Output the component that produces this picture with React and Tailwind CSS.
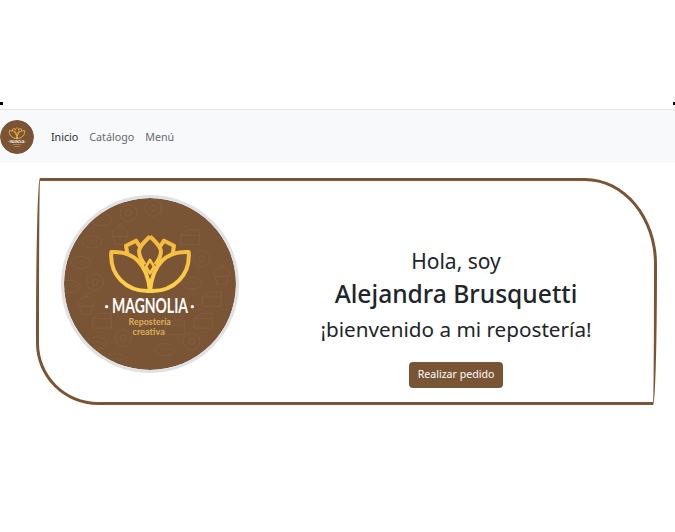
const brown = '#7a5535';

function Doodle({ x, y, kind }) {
    // faint bakery doodles behind the logo
    const stroke = { fill: 'none', stroke: '#835e3c', strokeWidth: 3 };
    if (kind === 'donut') {
        return (
            <g transform={`translate(${x} ${y})`} {...stroke}>
                <circle r="25" />
                <circle r="9" />
            </g>
        );
    }
    if (kind === 'cupcake') {
        return (
            <g transform={`translate(${x} ${y})`} {...stroke}>
                <path d="M-20 0 L-14 24 H14 L20 0 Z" />
                <path d="M-23 0 C-28 -18 -10 -28 0 -28 C10 -28 28 -18 23 0 Z" />
                <circle cy="-33" r="5" />
            </g>
        );
    }
    if (kind === 'pie') {
        return (
            <g transform={`translate(${x} ${y})`} {...stroke}>
                <ellipse rx="30" ry="18" />
                <path d="M-16 -4 L-6 4 M-2 -8 L8 4 M12 -6 L20 2" />
            </g>
        );
    }
    return (
        <g transform={`translate(${x} ${y})`} {...stroke}>
            <path d="M-28 -8 H28 V20 H-28 Z" />
            <path d="M-28 -8 L-6 -24 H28 V-8" />
        </g>
    );
}

function Logo({ id }) {
    return (
        <svg viewBox="42 40 516 516" className="block w-full h-full rounded-full">
            <defs>
                <linearGradient id={id} gradientUnits="userSpaceOnUse" x1="0" y1="150" x2="0" y2="325">
                    <stop offset="0" stopColor="#f5b63c" />
                    <stop offset="1" stopColor="#fdd24e" />
                </linearGradient>
            </defs>
            <circle cx="300" cy="298" r="267" fill={brown} />
            <Doodle x={235} y={85} kind="donut" />
            <Doodle x={310} y={70} kind="donut" />
            <Doodle x={155} y={105} kind="pie" />
            <Doodle x={210} y={155} kind="cupcake" />
            <Doodle x={125} y={172} kind="pie" />
            <Doodle x={420} y={160} kind="cake" />
            <Doodle x={455} y={222} kind="donut" />
            <Doodle x={92} y={233} kind="pie" />
            <Doodle x={515} y={275} kind="cupcake" />
            <Doodle x={60} y={305} kind="pie" />
            <Doodle x={135} y={292} kind="donut" />
            <Doodle x={425} y={295} kind="pie" />
            <Doodle x={485} y={345} kind="cake" />
            <Doodle x={108} y={365} kind="cupcake" />
            <Doodle x={460} y={410} kind="cake" />
            <Doodle x={155} y={410} kind="cake" />
            <Doodle x={375} y={430} kind="cake" />
            <Doodle x={140} y={475} kind="pie" />
            <Doodle x={220} y={460} kind="donut" />
            <Doodle x={425} y={470} kind="donut" />
            <Doodle x={345} y={495} kind="pie" />
            <Doodle x={200} y={525} kind="pie" />
            <g fill="none" stroke={`url(#${id})`} strokeWidth="12" strokeLinejoin="round">
                <path d="M184 202 C248 198 292 235 300 319 C228 322 178 270 184 202 Z" />
                <path d="M416 202 C352 198 308 235 300 319 C372 322 422 270 416 202 Z" />
                <path d="M300 155 C285 170 272 180 268 195 C265 210 275 228 284 240" />
                <path d="M300 155 C315 170 328 180 332 195 C335 210 325 228 316 240" />
                <path d="M232 207 L228 183 L258 168 L270 186" />
                <path d="M368 207 L372 183 L342 168 L330 186" />
                <path d="M300 226 L312 246 L300 266 L288 246 Z" strokeWidth="8" />
            </g>
            <text x="300" y="384" textAnchor="middle" textLength="228" lengthAdjust="spacingAndGlyphs" fill="#fff" fontFamily="Lato, sans-serif" fontWeight="700" fontSize="62">MAGNOLIA</text>
            <circle cx="170" cy="366" r="5" fill="#fff" />
            <circle cx="427" cy="366" r="5" fill="#fff" />
            <text x="299" y="420" textAnchor="middle" textLength="127" lengthAdjust="spacingAndGlyphs" fill="#dcae5a" fontFamily="Lato, sans-serif" fontWeight="700" fontSize="28">Repostería</text>
            <text x="296" y="450" textAnchor="middle" textLength="97" lengthAdjust="spacingAndGlyphs" fill="#dcae5a" fontFamily="Lato, sans-serif" fontWeight="700" fontSize="28">creativa</text>
        </svg>
    );
}

export default function App() {
    return (
        <div className="w-[675px] h-[532px] bg-white overflow-hidden font-['Noto_Sans',sans-serif] text-[#212529]">
            <div className="h-[109px] flex items-end justify-between pb-[4px]">
                <span className="w-[3px] h-[3px] bg-black"></span>
                <span className="w-[2px] h-[3px] bg-black"></span>
            </div>

            {/* Navbar */}
            <nav className="h-[54px] bg-[#f8f9fa] border-t border-[#e3e3e3] flex items-center">
                <div className="w-[34px] h-[34px] rounded-full overflow-hidden">
                    <Logo id="goldSmall" />
                </div>
                <div className="flex gap-[11px] ml-[17px] mt-[2px] text-[10.7px]">
                    <a className="text-[#2b2f33]">Inicio</a>
                    <a className="text-[#666a6e]">Catálogo</a>
                    <a className="text-[#666a6e]">Menú</a>
                </div>
            </nav>

            {/* Hero */}
            <section className="mt-[15px] ml-[36px] w-[621px] h-[227px] border-[3px] border-[#7a5535] rounded-[4px_72px_4px_62px/155px_86px_140px_62px] flex items-center pl-[22px]">
                <div className="w-[178px] h-[178px] mt-[-16px] rounded-full border-[3px] border-[#dee2e6] overflow-hidden shrink-0">
                    <Logo id="goldBig" />
                </div>
                <div className="flex-1 flex flex-col items-center pt-[50px] pl-[19px]">
                    <h2 className="text-[21px] leading-[30px]">Hola, soy</h2>
                    <h1 className="text-[24.6px] leading-[36px] font-medium">Alejandra Brusquetti</h1>
                    <h3 className="mt-[2px] text-[20.7px] leading-[30px]">¡bienvenido a mi repostería!</h3>
                    <button className="mt-[18px] h-[26px] px-[8.5px] rounded-[4px] bg-[#7a5535] text-white text-[10.6px]">Realizar pedido</button>
                </div>
            </section>
        </div>
    );
}
